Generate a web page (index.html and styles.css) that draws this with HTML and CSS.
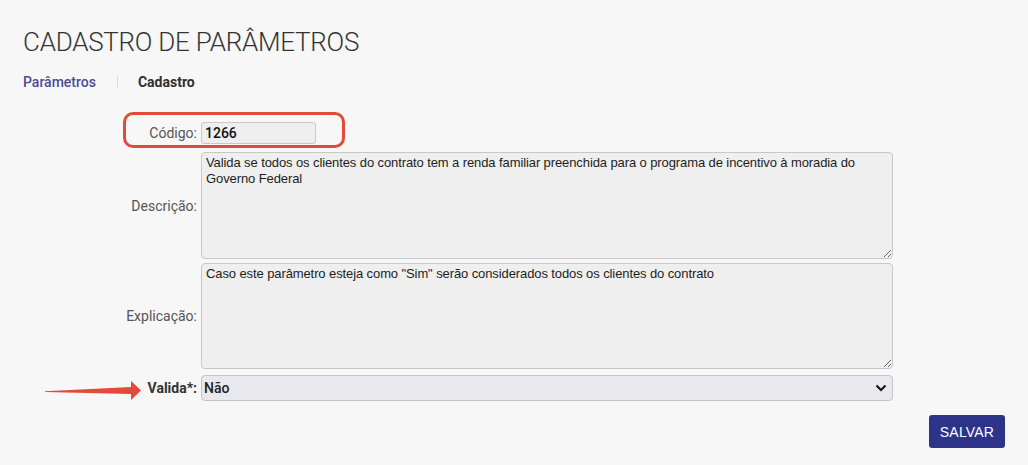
FILE: index.html
```html
<!DOCTYPE html>
<html lang="pt-BR">
<head>
<meta charset="utf-8">
<title>Cadastro de Parâmetros</title>
<link rel="stylesheet" href="styles.css">
</head>
<body>
<div class="page">
  <h1 class="title">CADASTRO DE PARÂMETROS</h1>
  <nav class="crumbs">
    <a class="crumb-link" href="#">Parâmetros</a>
    <span class="crumb-sep"></span>
    <span class="crumb-current">Cadastro</span>
  </nav>
  <form class="form">
    <div class="row row-code">
      <label class="label">Código:</label>
      <input class="input code" type="text" value="1266" readonly>
      <span class="highlight"></span>
    </div>
    <div class="row row-desc">
      <label class="label">Descrição:</label>
      <textarea class="area" readonly>Valida se todos os clientes do contrato tem a renda familiar preenchida para o programa de incentivo à moradia do Governo Federal</textarea>
    </div>
    <div class="row row-expl">
      <label class="label">Explicação:</label>
      <textarea class="area" readonly>Caso este parâmetro esteja como "Sim" serão considerados todos os clientes do contrato</textarea>
    </div>
    <div class="row row-valid">
      <label class="label strong">Valida*:</label>
      <div class="select-wrap">
        <select class="select">
          <option>Não</option>
          <option>Sim</option>
        </select>
        <svg class="chev" width="12" height="8" viewBox="0 0 12 8"><path d="M1.5 1.5 L6 6 L10.5 1.5" fill="none" stroke="#111" stroke-width="2"/></svg>
      </div>
      <svg class="arrow" width="100" height="22" viewBox="0 0 100 22"><polygon points="0,11.2 86,7 86,1 96,10.5 86,20 86,14 0,12" fill="#e24b39"/></svg>
    </div>
    <div class="actions">
      <button class="btn" type="button">SALVAR</button>
    </div>
  </form>
</div>
</body>
</html>
```
FILE: styles.css
```css
* { box-sizing: border-box; }
html, body { margin: 0; padding: 0; background: #f7f7f7; }
body { font-family: Roboto, "Liberation Sans", Arial, sans-serif; color: #333; overflow: hidden; }
.page { padding: 26px 23px 0 23px; height: 465px; }
.title {
  margin: 0;
  font-family: Roboto, sans-serif;
  font-weight: 300;
  font-size: 26px;
  line-height: 33px;
  color: #333;
  letter-spacing: -0.25px;
}
.crumbs {
  display: flex;
  align-items: center;
  margin-top: 15px;
  height: 16px;
  font-size: 14px;
}
.crumb-link { color: #4c4b96; text-decoration: none; font-weight: 500; }
.crumb-sep { width: 1px; height: 12px; background: #dcdcdc; margin: 0 20px 0 21px; }
.crumb-current { color: #2f2f2f; font-weight: 700; }

.form { margin-top: 32px; }
.row {
  position: relative;
  display: grid;
  grid-template-columns: 174px 692px;
  column-gap: 4px;
  align-items: center;
}
.label {
  text-align: right;
  font-size: 14px;
  color: #555;
}
.label.strong { font-weight: 700; color: #333; font-size: 14px; }
.input, .area, .select {
  font-family: "Liberation Sans", Arial, sans-serif;
  background: #efefef;
  border: 1px solid #c8c8c8;
  border-radius: 3px;
  color: #1d1d1d;
  outline: none;
}
.input.code {
  width: 115px;
  height: 22px;
  padding: 0 3px;
  font-family: Roboto, sans-serif;
  font-weight: 500;
  font-size: 14px;
  color: #111;
}
.highlight {
  position: absolute;
  left: 100px;
  top: -10px;
  width: 222px;
  height: 36px;
  border: 3px solid #e24b39;
  border-radius: 10px;
  pointer-events: none;
}
.row-desc { margin-top: 8px; }
.row-expl { margin-top: 4px; }
.row-valid { margin-top: 6px; }
.area {
  display: block;
  width: 692px;
  height: 107px;
  padding: 2px 4px;
  font-size: 13px;
  line-height: 16px;
  letter-spacing: -0.1px;
  resize: vertical;
  border-radius: 4px;
}
.row-expl .area { height: 106px; }
.select-wrap { position: relative; width: 692px; height: 26px; }
.select {
  appearance: none;
  -webkit-appearance: none;
  width: 100%;
  height: 26px;
  padding: 0 2px;
  background: #e9e9ed;
  border-color: #c3c3c8;
  border-radius: 4px;
  font-family: Roboto, sans-serif;
  font-weight: 500;
  font-size: 14px;
  color: #222;
}
.chev { position: absolute; right: 6px; top: 9px; pointer-events: none; }
.arrow { position: absolute; left: 22px; top: 5px; }
.actions { display: flex; justify-content: flex-end; margin-top: 14px; }
.btn {
  width: 76px;
  height: 33px;
  background: #2c3389;
  color: #fff;
  border: none;
  border-radius: 3px;
  font-family: "Liberation Sans", Arial, sans-serif;
  font-size: 14px;
  letter-spacing: 0.2px;
  cursor: pointer;
}
```
